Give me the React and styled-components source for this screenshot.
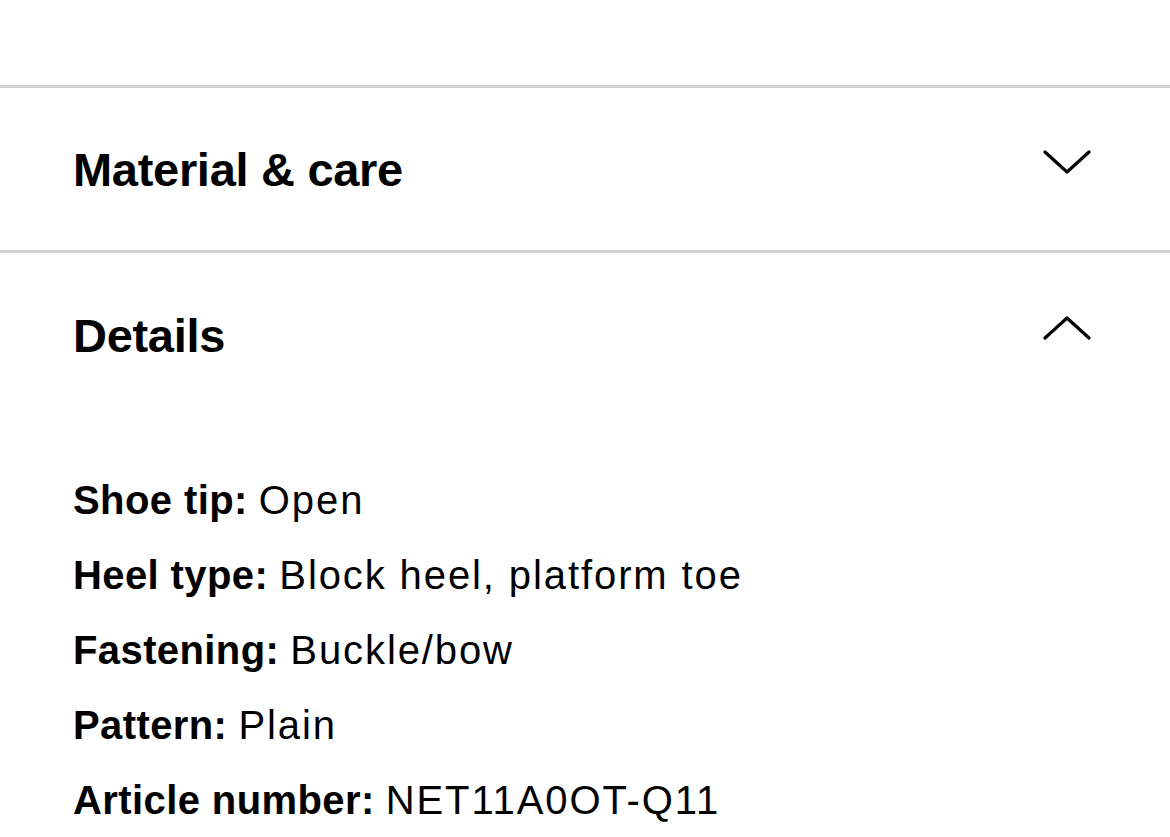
import React from 'react';
import styled, { createGlobalStyle } from 'styled-components';

const GlobalStyle = createGlobalStyle`
  html, body {
    margin: 0;
    padding: 0;
    background: #ffffff;
  }
  body {
    font-family: "Liberation Sans", Arial, Helvetica, sans-serif;
    color: #000;
  }
`;

const Page = styled.div`
  padding-top: 85px;
  width: 1170px;
  overflow: hidden;
`;

const Section = styled.section`
  border-top: 3px solid #d3d3d3;
`;

const Header = styled.div`
  display: flex;
  align-items: center;
  justify-content: space-between;
  height: ${p => p.$height}px;
  padding: 0 79px 0 73px;
`;

const Title = styled.h2`
  margin: 0;
  font-size: 47px;
  font-weight: 700;
  letter-spacing: -0.3px;
`;

const Icon = styled.svg`
  display: block;
  margin-bottom: 14px;
`;

const Body = styled.div`
  padding: 46px 73px 0;
`;

const Row = styled.p`
  margin: 0;
  font-size: 40px;
  line-height: 75px;
  white-space: nowrap;
`;

const Label = styled.b`
  font-weight: 700;
  letter-spacing: 0.4px;
`;

const Value = styled.span`
  letter-spacing: 1.9px;
`;

const Chevron = ({ up }) => (
  <Icon width="48" height="24" viewBox="0 0 48 24" fill="none">
    <path
      d={up ? 'M2 22 L24 2 L46 22' : 'M2 2 L24 22 L46 2'}
      stroke="#000"
      strokeWidth="3.2"
      strokeLinecap="round"
      strokeLinejoin="round"
    />
  </Icon>
);

const details = [
  ['Shoe tip:', 'Open'],
  ['Heel type:', 'Block heel, platform toe'],
  ['Fastening:', 'Buckle/bow'],
  ['Pattern:', 'Plain'],
  ['Article number:', 'NET11A0OT-Q11'],
];

export default function App() {
  return (
    <Page>
      <GlobalStyle />
      <Section>
        <Header $height={162}>
          <Title>Material &amp; care</Title>
          <Chevron />
        </Header>
      </Section>
      <Section>
        <Header $height={164}>
          <Title>Details</Title>
          <Chevron up />
        </Header>
        <Body>
          {details.map(([k, v]) => (
            <Row key={k}>
              <Label>{k}</Label> <Value>{v}</Value>
            </Row>
          ))}
        </Body>
      </Section>
    </Page>
  );
}
